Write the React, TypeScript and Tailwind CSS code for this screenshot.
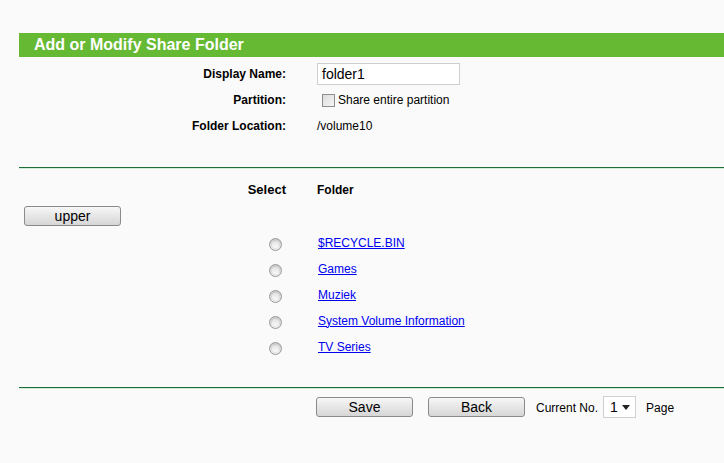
const folders = ['$RECYCLE.BIN', 'Games', 'Muziek', 'System Volume Information', 'TV Series'];

function Btn({ label }: { label: string }) {
  return (
    <button className="w-[97px] h-[20px] rounded-[3px] border border-[#8a8a8a] bg-gradient-to-b from-[#f7f7f7] to-[#d6d6d6] text-[14px] leading-none text-black">
      {label}
    </button>
  );
}

function Radio() {
  return (
    <span className="inline-flex w-[13px] h-[13px] rounded-full border border-[#9a9a9a] bg-gradient-to-b from-[#c8c8c8] to-[#eeeeee] items-center justify-center">
      <span className="w-[7px] h-[7px] rounded-full bg-gradient-to-b from-[#e2e2e2] to-[#fafafa]" />
    </span>
  );
}

function Divider() {
  return <div className="border-t border-[#1b6f36] border-b-[1px] border-b-[#d4ead8]" />;
}

export default function App() {
  return (
    <div className="min-h-screen bg-[#fafafa] pt-[33px] pl-[19px] text-[12px] text-black" style={{ fontFamily: '"Liberation Sans", Arial, sans-serif' }}>
      <div className="h-[24px] bg-[#66b933] pl-[15px] flex items-center text-white font-bold text-[16px]">
        Add or Modify Share Folder
      </div>

      <div className="mt-[4px] grid grid-cols-[267px_1fr] gap-x-[31px]">
        <div className="h-[26px] flex items-center justify-end font-bold">Display Name:</div>
        <div className="h-[26px] flex items-center">
          <div className="w-[143px] h-[22px] border border-[#cfcfcf] bg-white flex items-center px-[4px] text-[14px]">folder1</div>
        </div>
        <div className="h-[26px] flex items-center justify-end font-bold">Partition:</div>
        <div className="h-[26px] flex items-center pl-[5px] gap-[3px]">
          <span className="w-[13px] h-[13px] border border-[#8e8e8e] bg-gradient-to-br from-[#dcdcdc] to-[#f6f6f6]" />
          <span>Share entire partition</span>
        </div>
        <div className="h-[26px] flex items-center justify-end font-bold">Folder Location:</div>
        <div className="h-[26px] flex items-center">/volume10</div>
      </div>

      <div className="mt-[28px]">
        <Divider />
      </div>

      <div className="mt-[11px] grid grid-cols-[267px_1fr] gap-x-[31px]">
        <div className="h-[20px] flex items-center justify-end font-bold text-[13px]">Select</div>
        <div className="h-[20px] flex items-center font-bold">Folder</div>
      </div>

      <div className="mt-[6px] ml-[5px]">
        <Btn label="upper" />
      </div>

      <div className="mt-[5px] grid grid-cols-[267px_1fr] gap-x-[32px]">
        {folders.map((f) => (
          <div key={f} className="contents">
            <div className="h-[26px] flex items-center justify-end pr-[4px]">
              <Radio />
            </div>
            <div className="h-[26px] flex items-center pb-[3px]">
              <a href="#" className="text-[#0000ee] underline">{f}</a>
            </div>
          </div>
        ))}
      </div>

      <div className="mt-[26px]">
        <Divider />
      </div>

      <div className="mt-[8px] grid grid-cols-[267px_1fr] gap-x-[30px]">
        <div />
        <div className="flex items-start">
          <Btn label="Save" />
          <div className="ml-[15px]">
            <Btn label="Back" />
          </div>
          <span className="ml-[11px] mt-[2px]">Current No.</span>
          <div className="ml-[5px] -mt-[1px] w-[33px] h-[22px] bg-white border border-[#d0d0d0] flex items-center justify-between pl-[6px] pr-[5px]">
            <span className="text-[14px]">1</span>
            <svg width="8" height="5" viewBox="0 0 8 5"><path d="M0 0h8L4 5z" fill="#222" /></svg>
          </div>
          <span className="ml-[10px] mt-[2px]">Page</span>
        </div>
      </div>
    </div>
  );
}
